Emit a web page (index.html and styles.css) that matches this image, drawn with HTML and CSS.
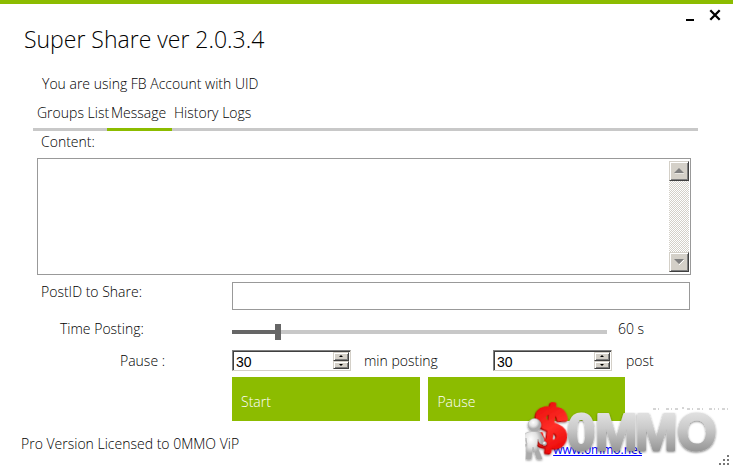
FILE: index.html
```html
<!DOCTYPE html>
<html lang="en">
<head>
<meta charset="utf-8">
<meta name="viewport" content="width=device-width, initial-scale=1">
<title>Super Share</title>
<link rel="stylesheet" href="styles.css">
</head>
<body>
<div class="window">
  <header class="titlebar">
    <h1 class="title">Super Share ver 2.0.3.4</h1>
    <div class="window-controls">
      <button class="window-button" type="button" aria-label="Minimize"><svg width="12" height="12" viewBox="0 0 12 12"><path d="M1 11h8" stroke="#000" stroke-width="2"/></svg></button>
      <button class="window-button" type="button" aria-label="Close"><svg width="12" height="12" viewBox="0 0 12 12"><path d="M1.3 1.3l9.4 9.4M10.7 1.3l-9.4 9.4" stroke="#000" stroke-width="2.3"/></svg></button>
    </div>
  </header>
  <p class="account">You are using FB Account with UID</p>
  <nav class="tabs">
    <button class="tab" type="button">Groups List</button>
    <button class="tab tab-active" type="button">Message</button>
    <button class="tab tab-last" type="button">History Logs</button>
  </nav>
  <main class="form">
    <label class="content-label" for="content">Content:</label>
    <div class="content-box">
      <textarea id="content" class="content-input"></textarea>
      <div class="scrollbar">
        <button class="bevel scroll-button" type="button" aria-label="Scroll up"><svg width="10" height="6" viewBox="0 0 10 6"><path d="M1 6h9" stroke="#fff"/><path d="M0 5L5 0l5 5z" fill="#808080"/></svg></button>
        <button class="bevel scroll-button" type="button" aria-label="Scroll down"><svg width="10" height="6" viewBox="0 0 10 6"><path d="M5 6l5-5" stroke="#fff"/><path d="M0 0h10L5 5z" fill="#808080"/></svg></button>
      </div>
    </div>
    <div class="row row-post">
      <label class="row-label" for="post-id">PostID to Share:</label>
      <input id="post-id" class="post-input" type="text">
    </div>
    <div class="row row-time">
      <label class="row-label indent-one" for="time">Time Posting:</label>
      <input id="time" class="slider" type="range" min="0" max="512" value="60">
      <output class="seconds" for="time">60 s</output>
    </div>
    <div class="row row-pause">
      <label class="row-label indent-two" for="minutes">Pause :</label>
      <div class="spinner">
        <input id="minutes" class="spinner-input" type="text" inputmode="numeric" value="30">
        <div class="spinner-buttons">
          <button class="bevel spin" type="button" aria-label="More minutes"><svg width="4" height="2" viewBox="0 0 4 2"><path d="M0 2l2-2 2 2z"/></svg></button>
          <button class="bevel spin" type="button" aria-label="Fewer minutes"><svg width="4" height="2" viewBox="0 0 4 2"><path d="M0 0h4L2 2z"/></svg></button>
        </div>
      </div>
      <label class="unit" for="minutes">min posting</label>
      <div class="spinner">
        <input id="posts" class="spinner-input" type="text" inputmode="numeric" value="30">
        <div class="spinner-buttons">
          <button class="bevel spin" type="button" aria-label="More posts"><svg width="4" height="2" viewBox="0 0 4 2"><path d="M0 2l2-2 2 2z"/></svg></button>
          <button class="bevel spin" type="button" aria-label="Fewer posts"><svg width="4" height="2" viewBox="0 0 4 2"><path d="M0 0h4L2 2z"/></svg></button>
        </div>
      </div>
      <label class="unit-post" for="posts">post</label>
    </div>
    <div class="actions">
      <button class="action" type="button">Start</button>
      <button class="action" type="button">Pause</button>
    </div>
  </main>
  <footer class="footer">
    <span>Pro Version Licensed to 0MMO ViP</span>
    <a class="site-link" href="#">www.0mmo.net</a>
  </footer>
  <svg class="logo" width="208" height="66" viewBox="525 398 208 66" role="img" aria-label="$0MMO">
    <defs>
      <linearGradient id="silver" gradientUnits="userSpaceOnUse" x1="0" y1="412" x2="0" y2="453"><stop offset="0" stop-color="#e2e2e2"/><stop offset=".4" stop-color="#cacaca"/><stop offset="1" stop-color="#929292"/></linearGradient>
      <linearGradient id="red" gradientUnits="userSpaceOnUse" x1="534" y1="405" x2="566" y2="452"><stop offset="0" stop-color="#e80c08"/><stop offset=".5" stop-color="#ff2e28"/><stop offset="1" stop-color="#e60000"/></linearGradient>
      <radialGradient id="figure" cx=".4" cy=".3"><stop offset="0" stop-color="#fff"/><stop offset=".6" stop-color="#e2e2e2"/><stop offset="1" stop-color="#aaa"/></radialGradient>
      <filter id="shadow" x="-10%" y="-10%" width="120%" height="130%"><feDropShadow dx="0" dy="1" stdDeviation="1" flood-opacity=".5"/></filter>
    </defs>
    <path d="M653 409h8m5 0h12m4-1h2m3 1h6m4 0h8m4 0h10m3 0h8" stroke="#aaa" stroke-width="1" stroke-dasharray="3 2 1 3"/>
    <g class="logo-text" filter="url(#shadow)">
      <text x="567" y="450">0</text><text x="595" y="450">M</text><text x="635" y="450">M</text><text x="677" y="450">O</text>
    </g>
    <g filter="url(#shadow)" transform="rotate(6 550 427)">
      <text class="dollar dollar-side" x="533" y="449" aria-hidden="true">$</text>
      <text class="dollar" x="534" y="448">$</text>
    </g>
    <g fill="url(#figure)" stroke="#aaa" stroke-width=".5" filter="url(#shadow)">
      <path d="M529 432q5-2 11 0l4 7v5q-4 1-5-2l-1-3-1 7 4 10 1 3h-5l-4-12-2 12h-5l1-14-1-7q-1 3 1 6l-2 1-3-6q2-6 7-7z"/>
      <ellipse cx="534.5" cy="425" rx="6.5" ry="6.5"/>
      <circle cx="544.5" cy="443.5" r="2"/>
    </g>
  </svg>
  <svg class="resize-grip" width="11" height="11" viewBox="0 0 11 11" aria-hidden="true"><path d="M8 0h2v2H8zM4 4h2v2H4zM8 4h2v2H8zM0 8h2v2H0zM4 8h2v2H4zM8 8h2v2H8z" fill="#777"/></svg>
</div>
</body>
</html>
```

FILE: styles.css
```css
* { box-sizing: border-box; }
body {
  margin: 0;
  background: #fff;
  color: #000;
  font: 300 14px/20px "Open Sans", "Noto Sans", sans-serif;
}
button, input, textarea { font: inherit; color: inherit; margin: 0; padding: 0; border: 0; border-radius: 0; }
svg { display: block; }
.window {
  position: relative;
  min-height: 100vh;
  border-top: 4px solid #8cbc00;
}
.titlebar { display: flex; justify-content: space-between; height: 70px; padding: 5px 12px 0 24px; }
.title { margin: 14px 0 0; font-size: 23px; line-height: 32px; font-weight: 300; }
.window-controls { display: flex; gap: 12px; height: 12px; }
.window-button { width: 12px; height: 12px; background: none; }
.account { margin: 0; padding-left: 42px; }
.tabs {
  display: flex;
  height: 29px;
  margin: 8px 35px 0 33px;
  background: linear-gradient(#c8c8c8, #c8c8c8) bottom / 100% 3px no-repeat;
}
.tab { width: 74px; padding: 0 0 8px 4px; background: none; white-space: nowrap; text-align: left; }
.tab-active { width: 65px; border-bottom: 3px solid #8cbc00; padding-bottom: 5px; }
.tab-last { width: 90px; padding-left: 2px; }
.form { padding: 1px 42px 0 37px; }
.content-label { display: block; height: 26px; padding-left: 4px; }
.content-box { display: flex; height: 117px; padding: 1px; border: 1px solid #999; }
.content-input { flex: 1; min-width: 0; resize: none; outline: 0; }
.scrollbar {
  display: flex;
  flex-direction: column;
  justify-content: space-between;
  width: 20px;
  margin: 1px 0;
  background: repeating-conic-gradient(#d4d0c8 0 25%, #fff 0 50%) 0 0 / 2px 2px;
}
.bevel {
  display: grid;
  place-items: center;
  background: #d4d0c8;
  border: 1px solid;
  border-color: #d4d0c8 #404040 #404040 #d4d0c8;
  box-shadow: inset 1px 1px #fff, inset -1px -1px #808080;
}
.scroll-button { height: 20px; }
.row { display: flex; align-items: center; }
.row-label { flex: 0 0 195px; padding-left: 4px; }
.indent-one { padding-left: 23px; }
.indent-two { padding-left: 83px; }
.row-post { margin-top: 7px; align-items: flex-start; }
.post-input { flex: 1; min-width: 0; height: 28px; margin-right: 1px; padding: 0 4px; border: 1px solid #999; }
.row-time { height: 20px; margin-top: 9px; }
.slider {
  flex: 1;
  min-width: 0;
  height: 16px;
  margin-top: 6px;
  appearance: none;
  background: linear-gradient(90deg, #666 12%, #fff 12% 13%, #c8c8c8 13%) center / 100% 4px no-repeat;
}
.slider::-webkit-slider-thumb { appearance: none; width: 6px; height: 16px; background: #666; }
.seconds { width: 84px; padding-left: 11px; }
.row-pause { height: 21px; margin-top: 11px; }
.spinner {
  display: flex;
  width: 119px;
  height: 21px;
  border: 1px solid;
  border-color: #808080 #d4d0c8 #d4d0c8 #808080;
  box-shadow: inset 1px 1px #404040;
  padding: 1px;
}
.spinner-input { flex: 1; min-width: 0; padding: 3px 0 0 2px; background: none; font: 14px/16px "Liberation Sans", sans-serif; outline: 0; }
.spinner-buttons { display: grid; grid-template-rows: 1fr 1fr; width: 16px; }
.spin { min-height: 0; }
.unit { width: 142px; padding-left: 13px; }
.unit-post { padding-left: 14px; }
.actions { display: flex; gap: 8px; margin: 6px 66px 0 195px; }
.action { flex: 197; height: 44px; padding: 5px 9px 0; background: #8cbc00; color: #fff; text-align: left; }
.action:first-child { flex-grow: 188; }
.footer { display: flex; padding: 13px 91px 4px 21px; justify-content: space-between; }
.site-link { padding-top: 6px; color: #00f; font-weight: 400; font-size: 12px; }
.logo { position: absolute; right: 0; bottom: 4px; }
.logo-text {
  font: bold 51px "Liberation Sans", sans-serif;
  fill: url(#silver);
  stroke: url(#silver);
  stroke-width: 2px;
  stroke-linejoin: round;
}
.dollar {
  font: bold 60px "Liberation Sans", sans-serif;
  fill: url(#red);
  stroke: url(#red);
  stroke-width: 3px;
  stroke-linejoin: round;
}
.dollar-side { fill: #b40000; stroke: #b40000; }
.resize-grip { position: absolute; right: 3px; bottom: 2px; }
```
